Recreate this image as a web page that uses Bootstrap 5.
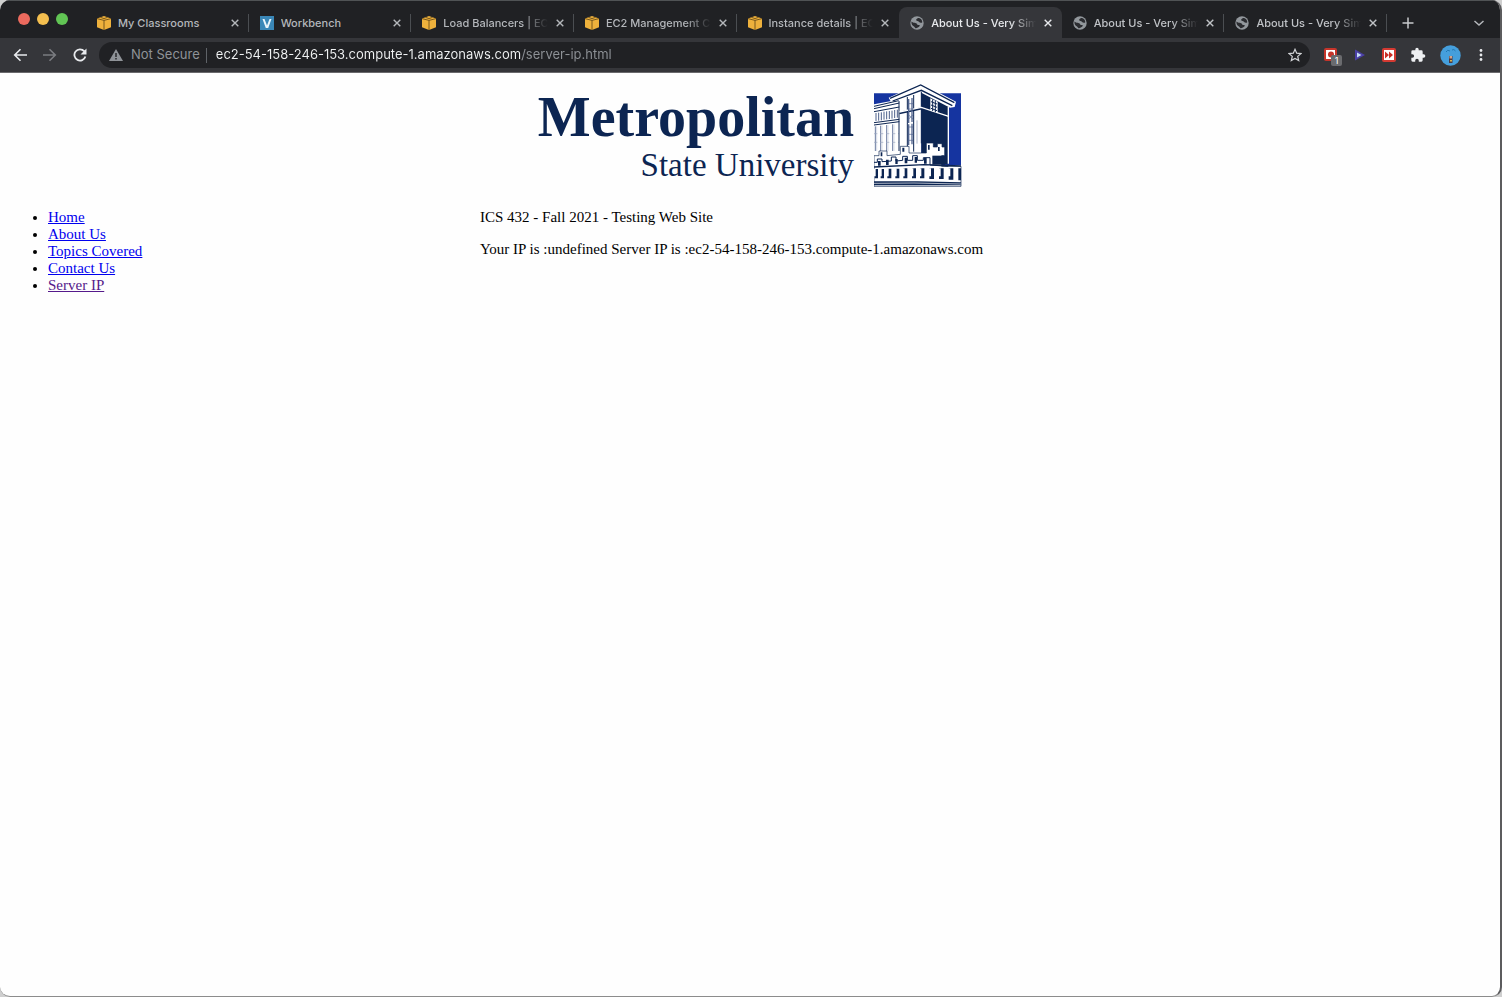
<!DOCTYPE html>
<html lang="en">
<head>
<meta charset="utf-8">
<meta name="viewport" content="width=device-width, initial-scale=1">
<title>About Us - Very Simple</title>
<link href="https://cdn.jsdelivr.net/npm/bootstrap@5.3.0/dist/css/bootstrap.min.css" rel="stylesheet">
<style>
body{background:#cfcfcf;font-family:"Liberation Serif",serif;color:#000}
button{border:0;background:none;padding:0;color:inherit;display:flex;align-items:center;justify-content:center}
.win{min-height:100vh;background:#fefefe;border-right:2px solid #5c5c5e;border-bottom:1px solid #8c8c8c;border-radius:10px;overflow:hidden}
.chrome{font-family:Inter,sans-serif}
.strip{background:#202124;height:38px;border-top:1px solid #505355;color:#b4b7bb;padding-top:6px}
.tabs{min-width:0}
.lights{width:86px;gap:7px;padding:0 0 8px 18px}
.lights button{width:12px;height:12px;border-radius:50%}
.tabitem{flex:1 1 0;min-width:0;padding:0 10px 0 11px;position:relative;border-radius:8px 8px 0 0}
.tabitem:not(.current):not(.before)::after{content:"";position:absolute;right:0;top:7px;height:18px;width:1px;background:#4b4e52}
.tabitem.current{background:#35363a;color:#e8eaed}
.tabitem.after{color:#c0c3c7}
.tablabel{flex:1;min-width:0;margin:0 8px 0 7px;font-size:11px;font-weight:500;line-height:16px;white-space:nowrap;overflow:hidden;color:inherit;text-decoration:none;-webkit-mask-image:linear-gradient(90deg,#000 75%,transparent)}
.full .tablabel{-webkit-mask-image:none}
.tail{width:113px;padding:0 15px}
.toolbar{background:#35363a;height:35px;padding:0 13px;border-bottom:1px solid #6a6a6d;color:#e8eaed}
.omni{background:#202124;border-radius:13px;height:26px;padding:0 8px 0 10px;margin-left:12px;color:#8f9398;font-size:13px}
.omni .sep{width:1px;height:15px;background:#5f6368;margin:0 9px 0 6px}
.omni input{border:0;outline:0;padding:0;min-width:0;font-size:13px;color:transparent;background:linear-gradient(90deg,#f1f3f4 306px,#8f9398 306px);-webkit-background-clip:text;background-clip:text;-webkit-text-stroke:0}
.exts{gap:14px;margin-left:14px}
.count{position:absolute;left:7px;top:7px;background:#6a6b6e;color:#fff;font-size:9px;line-height:11px;width:11px;border-radius:2px}
.brand{color:#0c2552;gap:20px;padding-top:10px}
.brand h1{font-size:56px;line-height:56px;font-weight:700;margin:6px 0 0}
.brand p{font-size:33px;line-height:33px;margin:4px 0 0}
.content{font-size:15px;line-height:17px;padding-top:22px}
.side{width:32%;padding-left:48px;margin:0}
.side a{color:#0000ee}
.side a.seen{color:#551a8b}
.content p{margin:0 0 15px}
</style>
</head>
<body>
<svg class="d-none">
<symbol id="cube" viewBox="0 0 14 14"><path d="M0 2.4 7 0l7 2.4v8.9L7 14l-7-2.7z" fill="#eeb13c"/><path d="M0 2.6 7 4.4l7-1.8M7 4.4V14M3.4 1.3 7 2.600l3.600-1.300" stroke="#5c4215" stroke-width=".8" fill="none"/></symbol>
<symbol id="globe" viewBox="0 0 14 14"><circle cx="7" cy="7" r="6.700" fill="#92979c"/><path d="M1.400 5.500C3 7 4.300 6.500 6 7.200c1.800.8 1 1.800 2.300 1.800 1.200 0 2 .5 1.200 1.300-1 1-2.500 2.200-4 2L4 10.500C2.400 10 1.200 8 1.400 5.500zM8 2c-.8 1-2.200 1-1.800 2.200.5 1.200 2 .4 2.700 1.500.6 1 2 1.200 3.300.8C12.500 4 10.500 2 8 2z" fill="#2b2c30"/></symbol>
<symbol id="x" viewBox="0 0 8 8"><path d="m.7.7 6.600 6.600m0-6.600L.7 7.300" stroke="currentColor" stroke-width="1.400"/></symbol>
</svg>
<div class="win">
<header class="chrome">
<div class="strip d-flex">
<div class="lights d-flex align-items-center flex-shrink-0"><button aria-label="Close" style="background:#ec6a5e"></button><button aria-label="Minimise" style="background:#f4bf4f"></button><button aria-label="Zoom" style="background:#61c554"></button></div>
<nav class="tabs d-flex flex-fill" aria-label="Tabs">
<div class="tabitem full d-flex align-items-center"><svg width="14" height="14"><use href="#cube"/></svg><a href="#" class="tablabel">My Classrooms</a><button aria-label="Close tab"><svg width="8" height="8"><use href="#x"/></svg></button></div>
<div class="tabitem full d-flex align-items-center"><svg width="14" height="14" viewBox="0 0 14 14"><path fill="#3a87b7" d="M0 0h14v14H0z"/><path d="M2.500 3h2L7 9.500 9.500 3h2L8.200 12H5.800z" fill="#e8f4fa"/></svg><a href="#" class="tablabel">Workbench</a><button aria-label="Close tab"><svg width="8" height="8"><use href="#x"/></svg></button></div>
<div class="tabitem d-flex align-items-center"><svg width="14" height="14"><use href="#cube"/></svg><a href="#" class="tablabel">Load Balancers | EC2</a><button aria-label="Close tab"><svg width="8" height="8"><use href="#x"/></svg></button></div>
<div class="tabitem d-flex align-items-center"><svg width="14" height="14"><use href="#cube"/></svg><a href="#" class="tablabel">EC2 Management Co</a><button aria-label="Close tab"><svg width="8" height="8"><use href="#x"/></svg></button></div>
<div class="tabitem before d-flex align-items-center"><svg width="14" height="14"><use href="#cube"/></svg><a href="#" class="tablabel">Instance details | EC2</a><button aria-label="Close tab"><svg width="8" height="8"><use href="#x"/></svg></button></div>
<div class="tabitem current d-flex align-items-center"><svg width="14" height="14"><use href="#globe"/></svg><a href="#" class="tablabel">About Us - Very Simple</a><button aria-label="Close tab"><svg width="8" height="8"><use href="#x"/></svg></button></div>
<div class="tabitem after d-flex align-items-center"><svg width="14" height="14"><use href="#globe"/></svg><a href="#" class="tablabel">About Us - Very Simple</a><button aria-label="Close tab"><svg width="8" height="8"><use href="#x"/></svg></button></div>
<div class="tabitem after d-flex align-items-center"><svg width="14" height="14"><use href="#globe"/></svg><a href="#" class="tablabel">About Us - Very Simple</a><button aria-label="Close tab"><svg width="8" height="8"><use href="#x"/></svg></button></div>
</nav>
<div class="tail d-flex align-items-center justify-content-between flex-shrink-0">
<button aria-label="New tab"><svg width="12" height="12" viewBox="0 0 12 12"><path d="M6 .5v11M.5 6h11" stroke="#c8cacd" stroke-width="1.500"/></svg></button>
<button aria-label="Search tabs"><svg width="12" height="12" viewBox="0 0 12 12"><path d="m1.500 4 4.500 4 4.500-4" stroke="#b4b7bb" stroke-width="1.500" fill="none"/></svg></button>
</div>
</div>
<div class="toolbar d-flex align-items-center">
<div class="d-flex gap-3">
<button aria-label="Back"><svg width="14" height="14" viewBox="0 0 14 14"><path d="M14 7H2M7.500 1.200 1.700 7l5.800 5.800" stroke="#e8eaed" stroke-width="1.600" fill="none"/></svg></button>
<button aria-label="Forward"><svg width="14" height="14" viewBox="0 0 14 14"><path d="M0 7h12M6.500 1.200 12.300 7l-5.800 5.800" stroke="#7a7c80" stroke-width="1.600" fill="none"/></svg></button>
<button aria-label="Reload"><svg width="14" height="14" viewBox="0 0 14 14"><path d="M12.400 8.500A5.600 5.600 0 1 1 11.200 3.200L12 4.200" stroke="#e8eaed" stroke-width="1.800" fill="none"/><path d="M13.500.5v6h-6z" fill="#e8eaed"/></svg></button>
</div>
<div class="omni d-flex align-items-center flex-grow-1">
<svg width="14" height="12" viewBox="0 0 14 12"><path d="M7 0l7 12H0z" fill="#8f9398"/><path d="M7 4v4M7 9v1.500" stroke="#202124" stroke-width="1.400"/></svg>
<label for="url" class="ms-2">Not Secure</label><span class="sep"></span>
<input id="url" class="flex-grow-1" type="text" value="ec2-54-158-246-153.compute-1.amazonaws.com/server-ip.html">
<button aria-label="Bookmark"><svg width="14" height="14" viewBox="0 0 14 14"><path d="m7 1.300 1.700 3.900 4.200.4-3.200 2.800 1 4.200L7 10.400l-3.700 2.200 1-4.200L1.100 5.600l4.200-.4z" stroke="#d0d2d5" stroke-width="1.200" fill="none"/></svg></button>
</div>
<div class="exts d-flex align-items-center">
<button class="position-relative" aria-label="Recorder"><svg width="14" height="14" viewBox="0 0 14 14"><rect x="1" y="1" width="11" height="11" rx="1" fill="#fff" stroke="#c5352b" stroke-width="2"/><circle cx="7" cy="6.500" r="3" fill="#c5352b"/></svg><span class="count">1</span></button>
<button aria-label="Player"><svg width="16" height="14" viewBox="0 0 16 14"><path d="M3 1.500 13 7 3 12.500z" fill="#4a3fa5"/><path d="m5 4.500 4.500 2.500L5 9.500z" fill="#c6dcf5"/></svg></button>
<button aria-label="Speed"><svg width="14" height="14" viewBox="0 0 14 14"><rect x="1" y="1" width="12" height="12" rx="1" fill="#fff" stroke="#d43a32" stroke-width="2"/><path d="M3 3.500 7 7l-4 3.500zM7 3.500 11 7l-4 3.500z" fill="#c92f28"/></svg></button>
<button aria-label="Extensions"><svg width="16" height="16" viewBox="0 0 24 24"><path d="M20.500 11H19V7a2 2 0 0 0-2-2h-4V3.500a2.500 2.500 0 0 0-5 0V5H4a2 2 0 0 0-2 2v3.800h1.500a2.700 2.700 0 0 1 0 5.400H2V20a2 2 0 0 0 2 2h3.800v-1.500a2.700 2.700 0 0 1 5.400 0V22H17a2 2 0 0 0 2-2v-4h1.500a2.500 2.500 0 0 0 0-5z" fill="#eef0f2"/></svg></button>
<button aria-label="Profile"><svg width="21" height="21" viewBox="0 0 21 21"><circle cx="10.500" cy="10.500" r="10.200" fill="#459fdc"/><path d="M6 7q1.500-3 4-1M12 5q2-1.500 3.500 1" stroke="#2377b2" fill="none"/><path d="M9 11h3.500v7H9z" fill="#4c3940"/><path d="M9.500 11h2.500v2.500H9.500z" fill="#d4a184"/><path d="M10 15h2v1.500h-2z" fill="#d9b24c"/></svg></button>
<button aria-label="Menu"><svg width="12" height="14" viewBox="0 0 12 14" fill="#e8eaed"><circle cx="6" cy="2.500" r="1.400"/><circle cx="6" cy="7" r="1.400"/><circle cx="6" cy="11.500" r="1.400"/></svg></button>
</div>
</div>
</header>
<main>
<div class="brand d-flex justify-content-center">
<div class="text-end"><h1>Metropolitan</h1><p>State University</p></div>
<svg width="88" height="104" viewBox="24 20 264 312" role="img" aria-label="University building">
<path fill="#1534a0" d="M24 51h261v215H24z"/>
<path fill="#fff" d="M24 84 76 74l24-6 0 180H24zM98 60l68-24v200H98z"/>
<path fill="#0c2552" d="m166 46 82 44v174h-82z"/>
<path fill="#fff" d="M68 64 164 20l106 56-4 16-14 2-86-45-90 29z"/>
<path d="m72 66 92-40 101 53M80 74l86-32 93 46" stroke="#0c2552" stroke-width="4" fill="none"/>
<path d="m24 90 74-17M24 97l76-17M24 106l76-14M24 139l76-10M24 146l76-10" stroke="#0c2552" stroke-width="3"/>
<path d="M30 110v24M38 109v24M46 108v24M54 106v24M62 105v24M70 104v24M78 103v24M86 101v24M94 100v24" stroke="#4d608b" stroke-width="3"/>
<path d="M28 150v74M44 148v76M62 146v78M80 144v80" stroke="#6c7ca0" stroke-width="3"/><path d="M32 150v74M48 148v76M66 146v78M84 144v80" stroke="#c4cbdb" stroke-width="2"/>
<path d="M24 172h74M24 198h74" stroke="#9aa6c0" stroke-width="2" stroke-dasharray="10 8"/>
<path d="M99 74v150M124 62v160M143 56v170M166 46v155" stroke="#0c2552" stroke-width="3"/>
<path d="M100 110l66-14 82 27" stroke="#0c2552" stroke-width="7" fill="none"/><path d="M100 107l66-14 82 27" stroke="#fff" stroke-width="4" fill="none"/>
<path d="M128 68v72M138 65v72M128 144v62M138 142v62" stroke="#52658f" stroke-width="4"/><path d="m126 114 16 16m0-16-16 16M126 82h16M126 98h16M126 152h16M126 174h16M126 192h16" stroke="#52658f" stroke-width="2"/>
<path d="M153 132v70" stroke="#8290b0" stroke-width="2"/>
<path d="m193 66 22 10v34l-22-8z" fill="#fff"/><path d="m195 76 18 7M195 86l18 7M195 96l18 7M200 69v35M208 73v35" stroke="#0c2552" stroke-width="3"/>
<path d="M247 92v170" stroke="#fff" stroke-width="4"/>
<path d="M24 238h15v-14h24v14l40-4v-24h26v20h52v-30h21v12h12v-10h14v10h8v26h-9v32h58v60H24z" fill="#fff" stroke="#0c2552" stroke-width="2"/>
<path d="M199 238h38v27h-38z" fill="#0c2552"/>
<path d="M44 228h5v12h-5zM109 214h6v12h-6zM186 206h5v14h-5zM216 212h5v12h-5z" fill="#0c2552"/>
<path d="M24 258h10v-10h14v8l28-2v-12h14v12l20-2v-12h14v12h16v-14h14v14h18v-8h20v22l55 4" stroke="#0c2552" stroke-width="3" fill="none"/>
<path d="M36 254h8v14h-8zM60 250h8v16h-8zM88 248h7v15h-7zM116 244h8v17h-8zM146 242h7v17h-7zM174 244h8v18h-8z" fill="#0c2552"/>
<path d="M24 272l150-7 111 4" stroke="#0c2552" stroke-width="4" fill="none"/>
<path d="M26 278h10v28H26zM44 278h10v28H44zM64 277h12v29H64zM88 277h12v29H88zM112 276h12v30h-12zM138 276h12v30h-12zM162 276h13v30h-13zM190 276h14v32h-14zM219 276h14v32h-14zM248 276h14v34h-14zM277 276h8v36h-8z" fill="#0c2552"/>
<path d="M24 278h5v22h-5zM42 278h5v22h-5zM62 276h6v24h-6zM86 276h6v24h-6zM110 276h6v24h-6zM136 276h6v24h-6zM160 276h6v24h-6zM188 276h7v24h-7zM217 276h7v24h-7zM246 276h7v24h-7z" fill="#fff"/>
<path fill="#0c2552" d="M24 315h130l131 3v9H24z"/><path d="m24 321 120-1 141 3" stroke="#fff" stroke-width="2" fill="none"/>
</svg>
</div>
<div class="content d-flex">
<ul class="side flex-shrink-0"><li><a href="#">Home</a></li><li><a href="#">About Us</a></li><li><a href="#">Topics Covered</a></li><li><a href="#">Contact Us</a></li><li><a href="#" class="seen">Server IP</a></li></ul>
<div><p>ICS 432 - Fall 2021 - Testing Web Site</p><p>Your IP is :undefined Server IP is :ec2-54-158-246-153.compute-1.amazonaws.com</p></div>
</div>
</main>
</div>
<script src="https://cdn.jsdelivr.net/npm/bootstrap@5.3.0/dist/js/bootstrap.bundle.min.js"></script>
</body>
</html>
